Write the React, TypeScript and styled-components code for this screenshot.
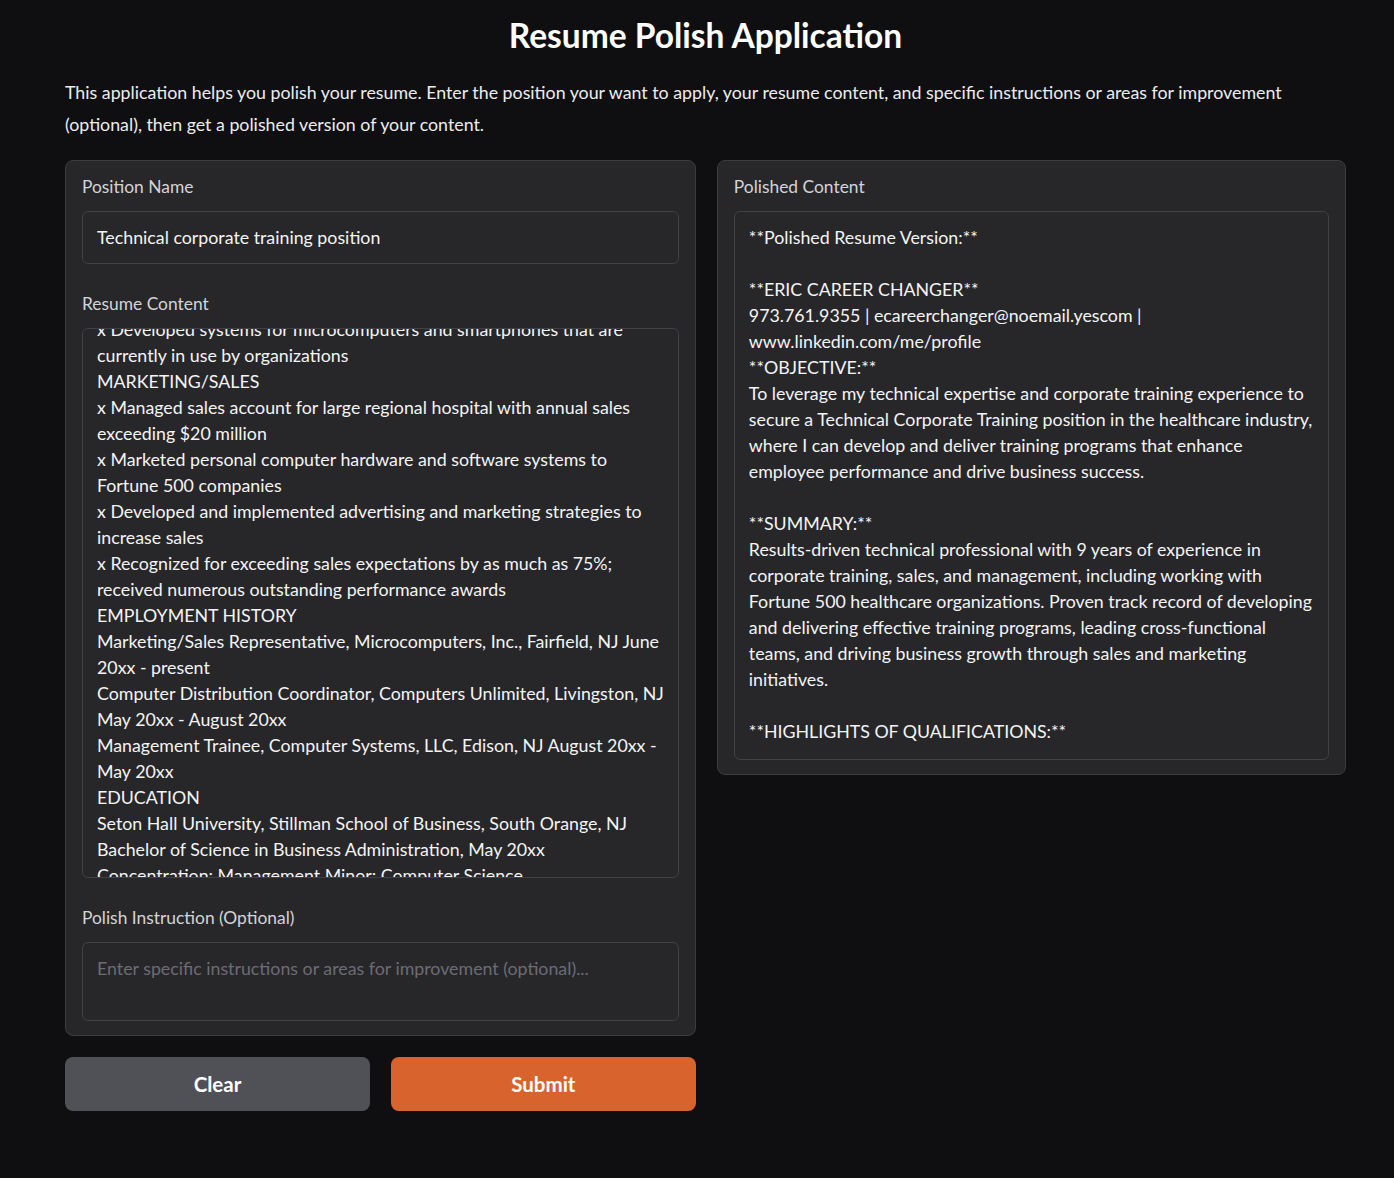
import { useLayoutEffect, useRef } from "react"
import styled, { createGlobalStyle } from "styled-components"

const GlobalStyle = createGlobalStyle`
  html, body {
    margin: 0;
    padding: 0;
    background: #0f0f11;
  }
  body {
    font-family: Lato, "Open Sans", "Liberation Sans", sans-serif;
    color: #f4f4f5;
  }
`

const Page = styled.div`
  width: 1281px;
  padding: 14px 0 60px 65px;
`

const Title = styled.h1`
  margin: 0;
  text-align: center;
  font-size: 33.5px;
  line-height: 42px;
  font-weight: 700;
  color: #ffffff;
`

const Intro = styled.p`
  margin: 20px 0 20px;
  font-size: 17.8px;
  line-height: 32px;
  color: #ececee;
`

const Columns = styled.div`
  display: grid;
  grid-template-columns: 1fr 1fr;
  gap: 21px;
  align-items: start;
`

const Column = styled.div`
  display: flex;
  flex-direction: column;
  gap: 21px;
`

const Panel = styled.div`
  background: #27272a;
  border: 1px solid #3b3b40;
  border-radius: 8px;
  padding: 16px 16px 14px;
  display: flex;
  flex-direction: column;
  gap: 30px;
`

const Field = styled.div`
  display: flex;
  flex-direction: column;
  gap: 14px;
`

const Label = styled.div`
  font-size: 17.4px;
  line-height: 20px;
  color: #d4d4d8;
`

const Box = styled.div<{ $height: number; $muted?: boolean }>`
  height: ${(p) => p.$height}px;
  box-sizing: border-box;
  background: #27272a;
  border: 1px solid #404046;
  border-radius: 6px;
  padding: 12px 14px;
  overflow: hidden;
  font-size: 17.8px;
  line-height: 26px;
  color: ${(p) => (p.$muted ? "#6c6c74" : "#f4f4f5")};
  scrollbar-width: none;
  &::-webkit-scrollbar {
    display: none;
  }
`

const Line = styled.div`
  white-space: pre;
  min-height: 26px;
`

const Buttons = styled.div`
  display: grid;
  grid-template-columns: 1fr 1fr;
  gap: 21px;
`

const Button = styled.button<{ $primary?: boolean }>`
  height: 54px;
  border: none;
  border-radius: 8px;
  font-family: inherit;
  font-size: 20.5px;
  font-weight: 700;
  color: #ffffff;
  background: ${(p) => (p.$primary ? "#d9632c" : "#505057")};
  cursor: pointer;
`

const resumeLines = [
  "x Designed and delivered technical training to groups of up to 50",
  "employees on hardware and software systems",
  "x Developed systems for microcomputers and smartphones that are",
  "currently in use by organizations",
  "MARKETING/SALES",
  "x Managed sales account for large regional hospital with annual sales",
  "exceeding $20 million",
  "x Marketed personal computer hardware and software systems to",
  "Fortune 500 companies",
  "x Developed and implemented advertising and marketing strategies to",
  "increase sales",
  "x Recognized for exceeding sales expectations by as much as 75%;",
  "received numerous outstanding performance awards",
  "EMPLOYMENT HISTORY",
  "Marketing/Sales Representative, Microcomputers, Inc., Fairfield, NJ June",
  "20xx - present",
  "Computer Distribution Coordinator, Computers Unlimited, Livingston, NJ",
  "May 20xx - August 20xx",
  "Management Trainee, Computer Systems, LLC, Edison, NJ August 20xx -",
  "May 20xx",
  "EDUCATION",
  "Seton Hall University, Stillman School of Business, South Orange, NJ",
  "Bachelor of Science in Business Administration, May 20xx",
  "Concentration: Management Minor: Computer Science",
  "Certificate in Training and Development",
]

const polishedLines = [
  "**Polished Resume Version:**",
  "",
  "**ERIC CAREER CHANGER**",
  "973.761.9355 | ecareerchanger@noemail.yescom |",
  "www.linkedin.com/me/profile",
  "**OBJECTIVE:**",
  "To leverage my technical expertise and corporate training experience to",
  "secure a Technical Corporate Training position in the healthcare industry,",
  "where I can develop and deliver training programs that enhance",
  "employee performance and drive business success.",
  "",
  "**SUMMARY:**",
  "Results-driven technical professional with 9 years of experience in",
  "corporate training, sales, and management, including working with",
  "Fortune 500 healthcare organizations. Proven track record of developing",
  "and delivering effective training programs, leading cross-functional",
  "teams, and driving business growth through sales and marketing",
  "initiatives.",
  "",
  "**HIGHLIGHTS OF QUALIFICATIONS:**",
]

export default function App() {
  const resumeRef = useRef<HTMLDivElement>(null)

  useLayoutEffect(() => {
    // textarea is scrolled part-way down the resume
    if (resumeRef.current) resumeRef.current.scrollTop = 2 * 26 + 25
  }, [])

  return (
    <>
      <GlobalStyle />
      <Page>
        <Title>Resume Polish Application</Title>
        <Intro>
          This application helps you polish your resume. Enter the position your want to apply, your resume content, and specific instructions or areas for improvement
          <br />
          (optional), then get a polished version of your content.
        </Intro>

        <Columns>
          <Column>
            <Panel>
              <Field>
                <Label>Position Name</Label>
                <Box $height={53}>
                  <Line>Technical corporate training position</Line>
                </Box>
              </Field>
              <Field>
                <Label>Resume Content</Label>
                <Box $height={550} ref={resumeRef}>
                  {resumeLines.map((l, i) => (
                    <Line key={i}>{l}</Line>
                  ))}
                </Box>
              </Field>
              <Field>
                <Label>Polish Instruction (Optional)</Label>
                <Box $height={79} $muted>
                  <Line>Enter specific instructions or areas for improvement (optional)...</Line>
                </Box>
              </Field>
            </Panel>
            <Buttons>
              <Button>Clear</Button>
              <Button $primary>Submit</Button>
            </Buttons>
          </Column>

          <Panel>
            <Field>
              <Label>Polished Content</Label>
              <Box $height={549}>
                {polishedLines.map((l, i) => (
                  <Line key={i}>{l}</Line>
                ))}
              </Box>
            </Field>
          </Panel>
        </Columns>
      </Page>
    </>
  )
}
